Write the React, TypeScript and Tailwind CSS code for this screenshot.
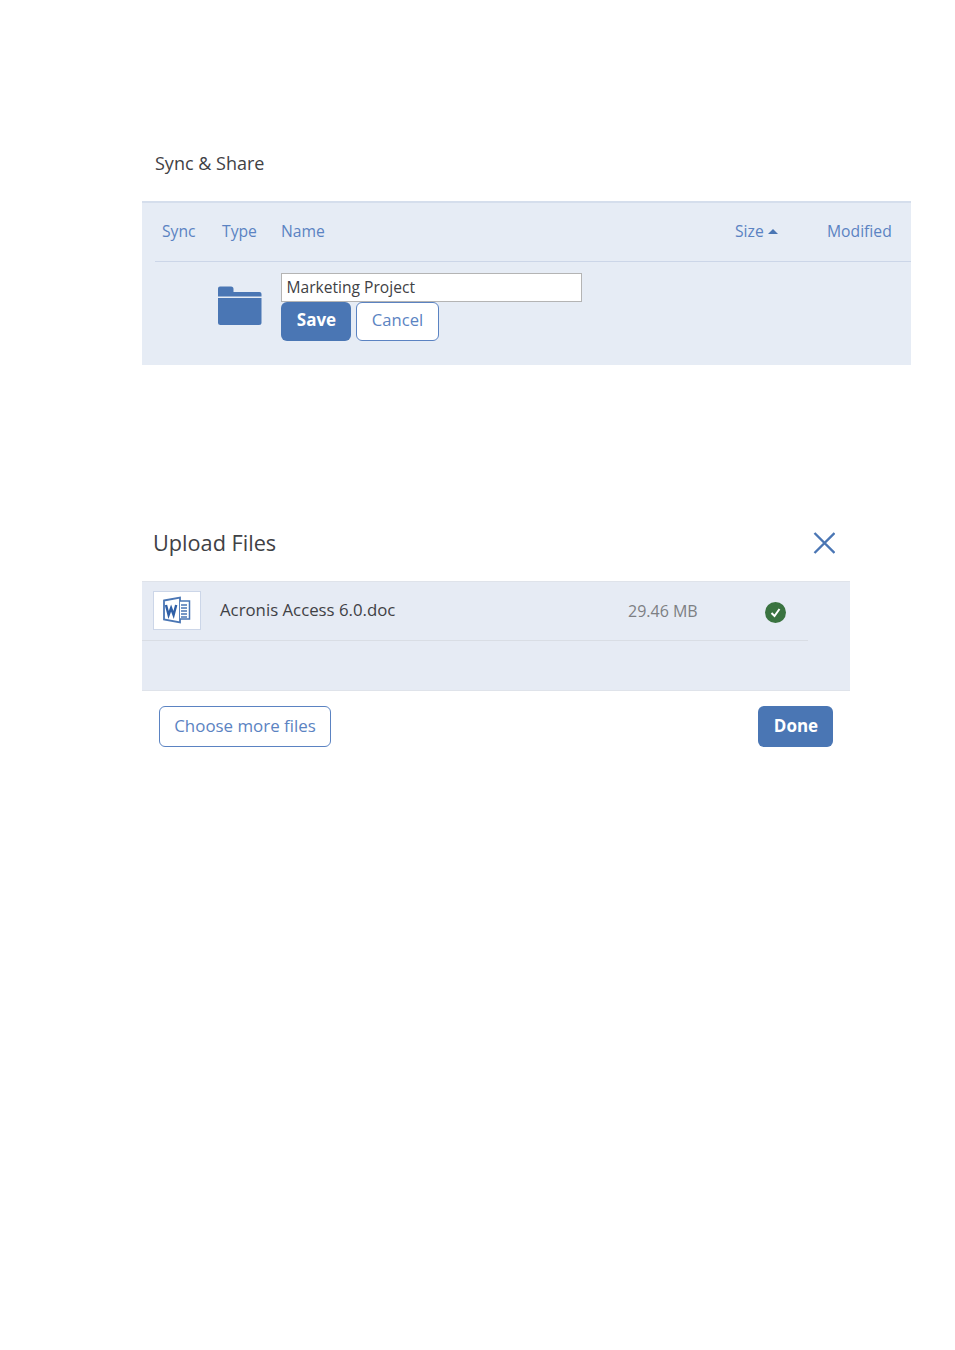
import React from 'react'

const FolderIcon: React.FC = () => (
  <svg width="44" height="39" viewBox="0 0 44 39" className="block">
    <path d="M0 2.5A2 2 0 0 1 2 .5h11a2.5 2.5 0 0 1 2.5 2.5v3H41.5a2 2 0 0 1 2 2V10.500H0z" fill="#4a76b4" />
    <path d="M0 12h43.500V36.500a2.500 2.500 0 0 1-2.500 2.500H2.500A2.500 2.500 0 0 1 0 36.500z" fill="#4a76b4" />
  </svg>
)

const WordIcon: React.FC = () => (
  <svg width="28" height="28" viewBox="0 0 28 28" className="block">
    <path d="M1 4.500 17 1.500V26.500L1 23.500z" fill="#fff" stroke="#4a76b4" strokeWidth="1.800" />
    <path d="M17 5H26.500V23H17" fill="#fff" stroke="#4a76b4" strokeWidth="1.500" />
    <path d="M18 9h6M18 12h6M18 15h6M18 18h6M18 21h6" stroke="#4a76b4" strokeWidth="1.300" />
    <path d="M3 9l2.600 10 2.500-7 2.500 7L13.200 9" fill="none" stroke="#2f5fa6" strokeWidth="2.400" />
  </svg>
)

const CheckBadge: React.FC = () => (
  <svg width="21" height="21" viewBox="0 0 21 21" className="block">
    <circle cx="10.500" cy="10.500" r="10.500" fill="#3a7340" />
    <path d="M6.500 11l3 3 5-7" fill="none" stroke="#fff" strokeWidth="2" />
  </svg>
)

const CloseIcon: React.FC = () => (
  <svg width="22" height="22" viewBox="0 0 22 22" className="block">
    <path d="M1.500 1l20 20M21.500 1l-20 20" stroke="#4a76b4" strokeWidth="2.400" />
  </svg>
)

export default function App() {
  return (
    <div className="w-[955px] h-[1350px] bg-white pl-[142px] pt-[152px] font-['Open_Sans',sans-serif]">
      <h2 className="pl-[13px] h-[22px] text-[18px] leading-[22px] text-[#3f4145]">Sync &amp; Share</h2>

      <div className="mt-[27px] w-[769px] h-[164px] bg-[#e6ecf5] border-t-2 border-[#d5deec]">
        <div className="ml-[13px] h-[59px] pl-[7px] flex items-center border-b border-[#ccd6e8] text-[15.700px] text-[#5b83c2]">
          <div className="w-[60px]">Sync</div>
          <div className="w-[59px]">Type</div>
          <div className="w-[454px]">Name</div>
          <div className="w-[92px] flex items-center gap-[4px]">
            Size
            <span className="w-0 h-0 border-x-[5px] border-x-transparent border-b-[5px] border-b-[#4a76b4]" />
          </div>
          <div>Modified</div>
        </div>

        <div className="flex pl-[76px] pt-[11px]">
          <div className="pt-[13px] w-[63px]">
            <FolderIcon />
          </div>
          <div>
            <input
              readOnly
              value="Marketing Project"
              className="block w-[301px] h-[29px] bg-white border border-[#b4b4b4] px-[4.500px] pb-[1px] text-[15.600px] text-[#3f4145] outline-none"
            />
            <div className="flex gap-[5px]">
              <button className="w-[70px] h-[39px] pb-[3px] pl-[1px] rounded-[6px] bg-[#4a76b4] text-white font-bold text-[17px]">
                Save
              </button>
              <button className="w-[83px] h-[39px] pb-[3px] rounded-[6px] bg-white border border-[#5b83c2] text-[#5b83c2] text-[16.600px]">
                Cancel
              </button>
            </div>
          </div>
        </div>
      </div>

      <div className="mt-[163px] w-[708px] h-[30px] pl-[11px] pr-[15px] flex items-center justify-between">
        <h2 className="text-[21.700px] leading-[30px] text-[#3f4145]">Upload Files</h2>
        <CloseIcon />
      </div>

      <div className="mt-[23px] w-[708px] h-[110px] bg-[#e6ebf4] border-t border-b border-[#dfe3ea]">
        <div className="w-[666px] h-[59px] pl-[11px] pb-[2px] flex items-center border-b border-[#d9dde4]">
          <div className="w-[48px] h-[39px] bg-white border border-[#ccd6e8] flex items-center justify-center">
            <WordIcon />
          </div>
          <div className="ml-[19px] w-[408px] text-[16.800px] text-[#3f4145]">Acronis Access 6.0.doc</div>
          <div className="w-[137px] pt-[2px] text-[16px] text-[#7d7f83]">29.46 MB</div>
          <div className="pt-[4px]">
            <CheckBadge />
          </div>
        </div>
      </div>

      <div className="mt-[15px] w-[691px] pl-[17px] flex justify-between">
        <button className="w-[172px] h-[41px] pb-[2px] rounded-[6px] bg-white border border-[#5b83c2] text-[#5b83c2] text-[16.900px]">
          Choose more files
        </button>
        <button className="w-[75px] h-[41px] pb-[1px] pl-[1px] rounded-[6px] bg-[#4a76b4] text-white font-bold text-[17px]">
          Done
        </button>
      </div>
    </div>
  )
}
